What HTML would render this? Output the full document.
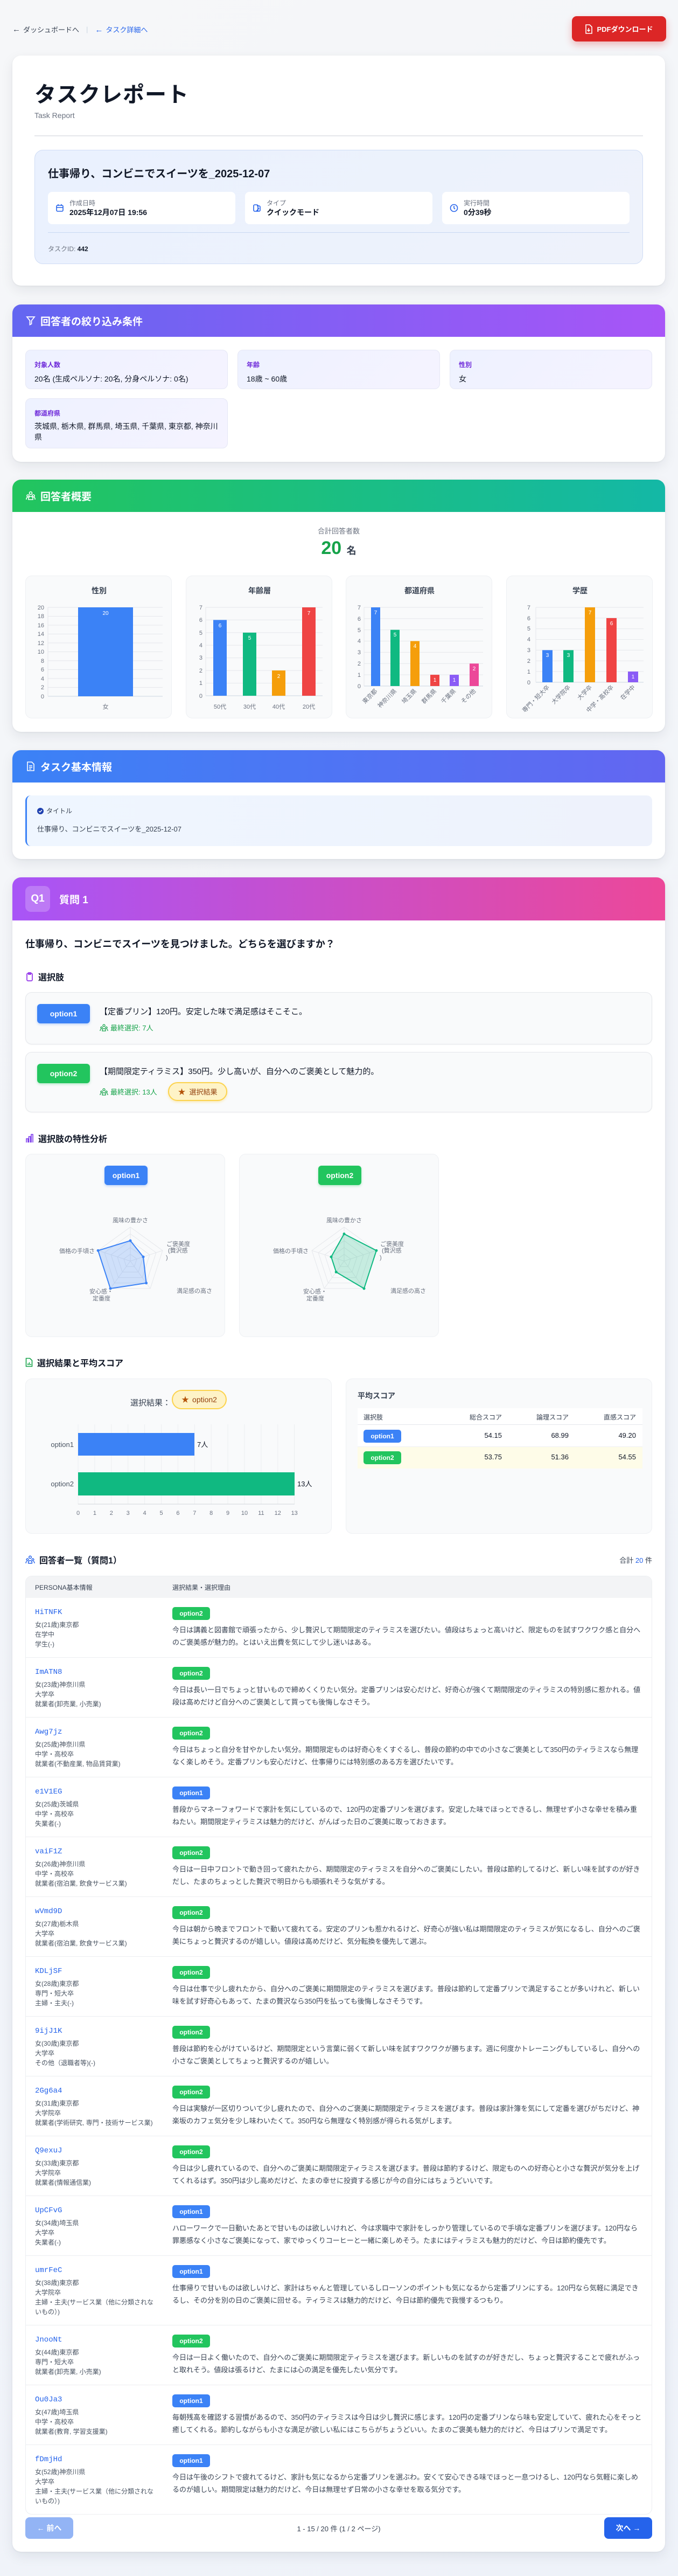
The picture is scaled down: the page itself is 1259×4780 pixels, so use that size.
<!DOCTYPE html>
<html lang="ja"><head><meta charset="utf-8"><title>タスクレポート</title>
<style>
*{box-sizing:border-box;margin:0;padding:0}
body{width:1259px;height:4780px;position:relative;background:linear-gradient(135deg,#f6f7f9,#eef2f9);font-family:"Liberation Sans","Noto Sans CJK JP",sans-serif;color:#111827;overflow:hidden}
.abs{position:absolute}
.card{position:absolute;left:23px;width:1212px;background:#fff;border-radius:16px;box-shadow:0 8px 24px rgba(15,23,42,.08),0 1px 3px rgba(15,23,42,.06);overflow:hidden}
.sh{height:60px;display:flex;align-items:center;padding-left:24px;color:#fff;font-size:19px;font-weight:700;gap:8px}
.sh svg{width:20px;height:20px}
.fbox{position:absolute;width:376px;background:linear-gradient(135deg,#eef2ff,#f5f3ff);border:1px solid #e5e7f5;border-radius:10px;padding:18px 16px}
.fbox .l{font-size:12px;color:#6d28d9;font-weight:700;margin-bottom:6px}
.fbox .v{font-size:14px;color:#111827;line-height:24px}
.cc{position:absolute;top:1068px;width:272px;height:265px;background:#f9fafb;border:1px solid #eef0f3;border-radius:12px}
.cc svg{position:absolute;left:0;top:0}
.ct{font-size:11px;fill:#6b7280;font-family:"Liberation Sans","Noto Sans CJK JP",sans-serif}
.h3{position:absolute;left:24px;font-size:16px;font-weight:700;display:flex;align-items:center;gap:8px;color:#111827}
.badge{display:inline-block;color:#fff;border-radius:6px;font-weight:700;text-align:center}
.b1{background:#3b82f6}.b2{background:#22c55e}
.opt{position:absolute;left:24px;width:1164px;background:#f9fafb;border:1px solid #e5e7eb;border-radius:12px;box-shadow:0 1px 2px rgba(0,0,0,.04)}
.row{display:flex;border-top:1px solid #eceef1;padding:16px 0 15px}
.lc{width:255px;padding-left:17px;padding-right:14px;flex:none}
.id{font-family:"Liberation Mono","Noto Sans CJK JP",monospace;font-size:14px;color:#2563eb;line-height:22px;margin-bottom:3px}
.inf{font-size:12px;color:#4b5563;line-height:18px}
.rc{flex:1;padding-right:16px;padding-left:17px}
.rb{display:inline-block;width:70px;height:24px;line-height:24px;font-size:12px;color:#fff;text-align:center;border-radius:5px;font-weight:700;margin-top:1px}
.rt{font-size:13px;color:#374151;line-height:23px;margin-top:7px}
</style></head><body>

<div class="abs" style="left:23px;top:44px;font-size:13px;color:#374151;display:flex;align-items:center;height:20px">
<span style="font-size:15px;margin-right:5px">←</span>ダッシュボードへ<span style="color:#cbd5e1;margin:0 13px">|</span><span style="color:#2563eb"><span style="font-size:15px;margin-right:5px">←</span>タスク詳細へ</span></div>
<div class="abs" style="left:1062px;top:30px;width:175px;height:47px;background:#dc2626;border-radius:9px;box-shadow:0 6px 14px rgba(220,38,38,.3);color:#fff;font-size:13px;font-weight:700;display:flex;align-items:center;justify-content:center;gap:8px">
<svg width="14" height="18" viewBox="0 0 14 18" fill="none" stroke="#fff" stroke-width="1.6"><path d="M2 1h7l4 4v12H2z"/><path d="M7 7v6M4.5 10.5 7 13l2.5-2.5"/></svg>PDFダウンロード</div>

<div class="card" style="top:103px;height:427px">
 <div class="abs" style="left:41px;top:40px;font-size:40px;font-weight:700;color:#111827;letter-spacing:1px">タスクレポート</div>
 <div class="abs" style="left:41px;top:103px;font-size:14px;color:#6b7280">Task Report</div>
 <div class="abs" style="left:41px;top:148px;width:1130px;height:2px;background:#e5e7eb"></div>
 <div class="abs" style="left:41px;top:175px;width:1130px;height:212px;background:linear-gradient(135deg,#eaf1fe,#eef2fb);border:1px solid #cfdcf5;border-radius:16px">
  <div class="abs" style="left:24px;top:27px;font-size:20px;font-weight:700">仕事帰り、コンビニでスイーツを_2025-12-07</div>
  <div class="abs" style="left:24px;top:77px;width:348px;height:60px;background:#fff;border-radius:8px"><svg class="abs" style="left:14px;top:22px" width="16" height="16" viewBox="0 0 16 16" fill="none" stroke="#2563eb" stroke-width="1.6"><rect x="2" y="3" width="12" height="11" rx="2"/><path d="M2 7h12M5 1v3M11 1v3"/></svg><div class="abs" style="left:40px;top:12px;font-size:12px;color:#6b7280">作成日時</div><div class="abs" style="left:40px;top:28px;font-size:14px;font-weight:700">2025年12月07日 19:56</div></div>
  <div class="abs" style="left:390px;top:77px;width:348px;height:60px;background:#fff;border-radius:8px"><svg class="abs" style="left:14px;top:22px" width="16" height="16" viewBox="0 0 16 16" fill="none" stroke="#2563eb" stroke-width="1.6"><rect x="2" y="2" width="8" height="12" rx="2"/><path d="M8 4h4a2 2 0 0 1 2 2v6a2 2 0 0 1-2 2H8M7 14l5-6"/></svg><div class="abs" style="left:40px;top:12px;font-size:12px;color:#6b7280">タイプ</div><div class="abs" style="left:40px;top:28px;font-size:14px;font-weight:700">クイックモード</div></div>
  <div class="abs" style="left:756px;top:77px;width:348px;height:60px;background:#fff;border-radius:8px"><svg class="abs" style="left:14px;top:22px" width="16" height="16" viewBox="0 0 16 16" fill="none" stroke="#2563eb" stroke-width="1.6"><circle cx="8" cy="8" r="6.5"/><path d="M8 4v4l2 2"/></svg><div class="abs" style="left:40px;top:12px;font-size:12px;color:#6b7280">実行時間</div><div class="abs" style="left:40px;top:28px;font-size:14px;font-weight:700">0分39秒</div></div>
  <div class="abs" style="left:24px;top:152px;width:1080px;height:1px;background:#c8d8f2"></div>
  <div class="abs" style="left:24px;top:174px;font-size:12px;color:#6b7280">タスクID: <b style="color:#111827">442</b></div>
 </div>
</div>

<div class="card" style="top:565px;height:292px">
 <div class="sh" style="background:linear-gradient(90deg,#6366f1,#a855f7)"><svg viewBox="0 0 20 20" fill="none" stroke="#fff" stroke-width="1.8"><path d="M3 3h14l-5.5 7v6l-3 1.5V10z"/></svg>回答者の絞り込み条件</div>
 <div class="fbox" style="left:24px;top:84px;height:73px"><div class="l">対象人数</div><div class="v">20名 (生成ペルソナ: 20名, 分身ペルソナ: 0名)</div></div>
 <div class="fbox" style="left:418px;top:84px;height:73px"><div class="l">年齢</div><div class="v">18歳 ~ 60歳</div></div>
 <div class="fbox" style="left:812px;top:84px;height:73px"><div class="l">性別</div><div class="v">女</div></div>
 <div class="fbox" style="left:24px;top:174px;height:93px"><div class="l">都道府県</div><div class="v" style="line-height:20px">茨城県, 栃木県, 群馬県, 埼玉県, 千葉県, 東京都, 神奈川県</div></div>
</div>

<div class="card" style="top:890px;height:468px">
 <div class="sh" style="background:linear-gradient(90deg,#22c55e,#14b8a6)"><svg viewBox="0 0 20 20" fill="none" stroke="#fff" stroke-width="1.6"><circle cx="10" cy="5" r="2.5"/><circle cx="5" cy="10" r="2"/><circle cx="15" cy="10" r="2"/><path d="M6 17v-2a4 4 0 0 1 8 0v2zM2 17v-1.5a3 3 0 0 1 3-3M18 17v-1.5a3 3 0 0 0-3-3"/></svg>回答者概要</div>
 <div class="abs" style="left:0;width:1212px;top:85px;text-align:center;font-size:13px;color:#6b7280">合計回答者数</div>
 <div class="abs" style="left:0;width:1212px;top:108px;text-align:center;color:#16a34a;font-size:34px;font-weight:700">20 <span style="font-size:18px;color:#374151">名</span></div>
</div>
<div class="cc" style="left:47px"><svg width="272" height="265">
<text x="136" y="32" text-anchor="middle" font-size="14" font-weight="700" fill="#374151">性別</text>
<g stroke="#e5e7eb"><line x1="41" x2="254" y1="58" y2="58"/><line x1="41" x2="254" y1="74.5" y2="74.5"/><line x1="41" x2="254" y1="91" y2="91"/><line x1="41" x2="254" y1="107.5" y2="107.5"/><line x1="41" x2="254" y1="124" y2="124"/><line x1="41" x2="254" y1="140.5" y2="140.5"/><line x1="41" x2="254" y1="157" y2="157"/><line x1="41" x2="254" y1="173.5" y2="173.5"/><line x1="41" x2="254" y1="190" y2="190"/><line x1="41" x2="254" y1="206.5" y2="206.5"/><line x1="41" x2="254" y1="223" y2="223" stroke="#cbd5e1"/><line x1="41" x2="41" y1="58" y2="223"/></g>
<g class="ct" text-anchor="end" font-size="10"><text x="34" y="62">20</text><text x="34" y="78">18</text><text x="34" y="95">16</text><text x="34" y="111">14</text><text x="34" y="128">12</text><text x="34" y="144">10</text><text x="34" y="161">8</text><text x="34" y="177">6</text><text x="34" y="194">4</text><text x="34" y="210">2</text><text x="34" y="227">0</text></g>
<rect x="97" y="58" width="102" height="165" fill="#3b82f6"/><text x="148" y="72" text-anchor="middle" font-size="10" fill="#fff">20</text>
<text x="148" y="246" text-anchor="middle" class="ct">女</text></svg></div>

<div class="cc" style="left:345px"><svg width="272" height="265">
<text x="136" y="32" text-anchor="middle" font-size="14" font-weight="700" fill="#374151">年齢層</text>
<g stroke="#e5e7eb"><line x1="36" x2="253" y1="58" y2="58"/><line x1="36" x2="253" y1="81.4" y2="81.4"/><line x1="36" x2="253" y1="104.9" y2="104.9"/><line x1="36" x2="253" y1="128.3" y2="128.3"/><line x1="36" x2="253" y1="151.7" y2="151.7"/><line x1="36" x2="253" y1="175.1" y2="175.1"/><line x1="36" x2="253" y1="198.6" y2="198.6"/><line x1="36" x2="253" y1="222" y2="222" stroke="#cbd5e1"/><line x1="36" x2="36" y1="58" y2="222"/></g>
<g class="ct" text-anchor="end" font-size="10"><text x="30" y="62">7</text><text x="30" y="85">6</text><text x="30" y="109">5</text><text x="30" y="132">4</text><text x="30" y="155">3</text><text x="30" y="179">2</text><text x="30" y="202">1</text><text x="30" y="226">0</text></g>
<rect x="50" y="81.4" width="25" height="140.6" fill="#3b82f6"/><rect x="105" y="104.9" width="25" height="117.1" fill="#10b981"/><rect x="159" y="175.1" width="25" height="46.9" fill="#f59e0b"/><rect x="215" y="58" width="25" height="164" fill="#ef4444"/>
<g font-size="10" fill="#fff" text-anchor="middle"><text x="62.5" y="95">6</text><text x="117.5" y="118">5</text><text x="171.5" y="189">2</text><text x="227.5" y="72">7</text></g>
<g class="ct" text-anchor="middle" font-size="10"><text x="62.5" y="246">50代</text><text x="117.5" y="246">30代</text><text x="171.5" y="246">40代</text><text x="227.5" y="246">20代</text></g></svg></div>

<div class="cc" style="left:642px"><svg width="272" height="265">
<text x="136" y="32" text-anchor="middle" font-size="14" font-weight="700" fill="#374151">都道府県</text>
<g stroke="#e5e7eb"><line x1="33" x2="254" y1="58" y2="58"/><line x1="33" x2="254" y1="78.9" y2="78.9"/><line x1="33" x2="254" y1="99.7" y2="99.7"/><line x1="33" x2="254" y1="120.6" y2="120.6"/><line x1="33" x2="254" y1="141.4" y2="141.4"/><line x1="33" x2="254" y1="162.3" y2="162.3"/><line x1="33" x2="254" y1="183.1" y2="183.1"/><line x1="33" x2="254" y1="204" y2="204" stroke="#cbd5e1"/><line x1="33" x2="33" y1="58" y2="204"/></g>
<g class="ct" text-anchor="end" font-size="10"><text x="27" y="62">7</text><text x="27" y="83">6</text><text x="27" y="104">5</text><text x="27" y="124">4</text><text x="27" y="145">3</text><text x="27" y="166">2</text><text x="27" y="187">1</text><text x="27" y="208">0</text></g>
<rect x="46" y="58" width="17" height="146" fill="#3b82f6"/><rect x="82" y="99.7" width="17" height="104.3" fill="#10b981"/><rect x="119" y="120.6" width="17" height="83.4" fill="#f59e0b"/><rect x="156" y="183.1" width="17" height="20.9" fill="#ef4444"/><rect x="192" y="183.1" width="17" height="20.9" fill="#8b5cf6"/><rect x="229" y="162.3" width="17" height="41.7" fill="#ec4899"/>
<g font-size="10" fill="#fff" text-anchor="middle"><text x="54.5" y="71">7</text><text x="90.5" y="112">5</text><text x="127.5" y="133">4</text><text x="164.5" y="196">1</text><text x="200.5" y="196">1</text><text x="237.5" y="175">2</text></g>
<g class="ct" text-anchor="end" font-size="10"><text transform="translate(58 214) rotate(-45)">東京都</text><text transform="translate(94 214) rotate(-45)">神奈川県</text><text transform="translate(131 214) rotate(-45)">埼玉県</text><text transform="translate(168 214) rotate(-45)">群馬県</text><text transform="translate(204 214) rotate(-45)">千葉県</text><text transform="translate(241 214) rotate(-45)">その他</text></g></svg></div>

<div class="cc" style="left:940px"><svg width="272" height="265">
<text x="136" y="32" text-anchor="middle" font-size="14" font-weight="700" fill="#374151">学歴</text>
<g stroke="#e5e7eb"><line x1="54" x2="254" y1="58" y2="58"/><line x1="54" x2="254" y1="77.9" y2="77.9"/><line x1="54" x2="254" y1="97.7" y2="97.7"/><line x1="54" x2="254" y1="117.6" y2="117.6"/><line x1="54" x2="254" y1="137.4" y2="137.4"/><line x1="54" x2="254" y1="157.3" y2="157.3"/><line x1="54" x2="254" y1="177.1" y2="177.1"/><line x1="54" x2="254" y1="197" y2="197" stroke="#cbd5e1"/><line x1="54" x2="54" y1="58" y2="197"/></g>
<g class="ct" text-anchor="end" font-size="10"><text x="44" y="62">7</text><text x="44" y="82">6</text><text x="44" y="101">5</text><text x="44" y="121">4</text><text x="44" y="141">3</text><text x="44" y="161">2</text><text x="44" y="181">1</text><text x="44" y="201">0</text></g>
<rect x="66" y="137.4" width="19" height="59.6" fill="#3b82f6"/><rect x="105" y="137.4" width="19" height="59.6" fill="#10b981"/><rect x="145" y="58" width="19" height="139" fill="#f59e0b"/><rect x="185" y="77.9" width="19" height="119.1" fill="#ef4444"/><rect x="225" y="177.1" width="19" height="19.9" fill="#8b5cf6"/>
<g font-size="10" fill="#fff" text-anchor="middle"><text x="75.5" y="150">3</text><text x="114.5" y="150">3</text><text x="154.5" y="71">7</text><text x="194.5" y="91">6</text><text x="234.5" y="190">1</text></g>
<g class="ct" text-anchor="end" font-size="10"><text transform="translate(80 207) rotate(-45)">専門・短大卒</text><text transform="translate(119 207) rotate(-45)">大学院卒</text><text transform="translate(159 207) rotate(-45)">大学卒</text><text transform="translate(199 207) rotate(-45)">中学・高校卒</text><text transform="translate(239 207) rotate(-45)">在学中</text></g></svg></div>

<div class="card" style="top:1392px;height:202px">
 <div class="sh" style="background:linear-gradient(90deg,#3b82f6,#6366f1)"><svg viewBox="0 0 20 20" fill="none" stroke="#fff" stroke-width="1.6"><path d="M4 2h8l4 4v12H4z"/><path d="M7 9h6M7 12h6M7 15h4"/></svg>タスク基本情報</div>
 <div class="abs" style="left:24px;top:84px;width:1164px;height:94px;background:linear-gradient(90deg,#eff6ff,#eef2fc);border-left:3px solid #3b82f6;border-radius:10px">
  <div class="abs" style="left:19px;top:20px;font-size:12px;color:#374151;display:flex;align-items:center;gap:5px"><svg width="12" height="12" viewBox="0 0 12 12"><circle cx="6" cy="6" r="6" fill="#1e40af"/><path d="M3.3 6.2 5.2 8 8.8 4.2" stroke="#fff" stroke-width="1.5" fill="none"/></svg>タイトル</div>
  <div class="abs" style="left:19px;top:52px;font-size:13px;color:#374151">仕事帰り、コンビニでスイーツを_2025-12-07</div>
 </div>
</div>

<div class="card" style="top:1628px;height:3107px">
 <div style="height:80px;background:linear-gradient(90deg,#a855f7,#ec4899);display:flex;align-items:center;padding-left:24px;gap:17px;color:#fff">
  <div style="width:46px;height:48px;border-radius:10px;background:rgba(255,255,255,.22);display:flex;align-items:center;justify-content:center;font-size:19px;font-weight:700">Q1</div>
  <div style="font-size:19px;font-weight:700">質問 1</div></div>
 <div class="abs" style="left:24px;top:110px;font-size:18px;font-weight:700">仕事帰り、コンビニでスイーツを見つけました。どちらを選びますか？</div>
 <div class="h3" style="top:172px"><svg width="16" height="18" viewBox="0 0 16 18" fill="none" stroke="#9333ea" stroke-width="1.7"><rect x="3" y="3" width="10" height="14" rx="2"/><path d="M6 2h4v3H6z"/></svg>選択肢</div>
 <div class="opt" style="top:213px;height:97px">
  <div class="badge b1 abs" style="left:21px;top:21px;width:98px;height:36px;line-height:36px;font-size:14px;box-shadow:0 2px 5px rgba(59,130,246,.3)">option1</div>
  <div class="abs" style="left:137px;top:24px;font-size:15px;color:#111827">【定番プリン】120円。安定した味で満足感はそこそこ。</div>
  <div class="abs" style="left:137px;top:55px;font-size:13px;color:#16a34a;display:flex;align-items:center;gap:4px"><svg width="16" height="14" viewBox="0 0 16 14" fill="none" stroke="#16a34a" stroke-width="1.3"><circle cx="8" cy="3" r="2"/><circle cx="3.5" cy="7" r="1.6"/><circle cx="12.5" cy="7" r="1.6"/><path d="M5 13v-1.5a3 3 0 0 1 6 0V13zM1 13v-1a2 2 0 0 1 2-2M15 13v-1a2 2 0 0 0-2-2"/></svg>最終選択: 7人</div>
 </div>
 <div class="opt" style="top:324px;height:112px">
  <div class="badge b2 abs" style="left:21px;top:21px;width:98px;height:36px;line-height:36px;font-size:14px;box-shadow:0 2px 5px rgba(34,197,94,.3)">option2</div>
  <div class="abs" style="left:137px;top:24px;font-size:15px;color:#111827">【期間限定ティラミス】350円。少し高いが、自分へのご褒美として魅力的。</div>
  <div class="abs" style="left:137px;top:63px;font-size:13px;color:#16a34a;display:flex;align-items:center;gap:4px"><svg width="16" height="14" viewBox="0 0 16 14" fill="none" stroke="#16a34a" stroke-width="1.3"><circle cx="8" cy="3" r="2"/><circle cx="3.5" cy="7" r="1.6"/><circle cx="12.5" cy="7" r="1.6"/><path d="M5 13v-1.5a3 3 0 0 1 6 0V13zM1 13v-1a2 2 0 0 1 2-2M15 13v-1a2 2 0 0 0-2-2"/></svg>最終選択: 13人</div>
  <div class="abs" style="left:264px;top:55px;width:110px;height:35px;border:2px solid #fcd34d;background:#fef3c7;border-radius:18px;font-size:13px;color:#92400e;display:flex;align-items:center;justify-content:center;gap:7px;box-shadow:0 2px 5px rgba(252,211,77,.4)"><span style="color:#b45309;font-size:14px">★</span>選択結果</div>
 </div>

 <div class="h3" style="top:472px"><svg width="16" height="18" viewBox="0 0 16 18" fill="none" stroke="#7c3aed" stroke-width="1.6"><path d="M2 17V10h3v7M6.5 17V6h3v11M11 17V2h3v15"/></svg>選択肢の特性分析</div>
 <div class="abs" style="left:24px;top:513px;width:371px;height:340px;background:#f9fafb;border:1px solid #eef0f3;border-radius:12px">
  <div class="badge b1 abs" style="left:146px;top:21px;width:80px;height:36px;line-height:36px;font-size:14px;box-shadow:0 2px 5px rgba(59,130,246,.3)">option1</div>
  <svg class="abs" style="left:0;top:0" width="371" height="340">
   <g fill="none" stroke="#e5e7eb"><polygon points="194,135 253.9,178.5 231,249 157,249 134.1,178.5"/><polygon points="194,147.6 241.9,182.4 223.6,238.8 164.4,238.8 146.1,182.4"/><polygon points="194,160.2 229.9,186.3 216.2,228.6 171.8,228.6 158.1,186.3"/><polygon points="194,172.8 218,190.2 208.8,218.4 179.2,218.4 170,190.2"/><polygon points="194,185.4 206,194.1 201.4,208.2 186.6,208.2 182,194.1"/><path d="M194 198V135M194 198l59.9-19.5M194 198l37 51M194 198l-37 51M194 198l-59.9-19.5"/></g>
   <polygon points="194,160.2 218,190.2 223.6,238.8 157,249 134.1,178.5" fill="rgba(59,130,246,.22)" stroke="#3b82f6" stroke-width="2"/>
   <g fill="#3b82f6"><circle cx="194" cy="160.2" r="2.5"/><circle cx="218" cy="190.2" r="2.5"/><circle cx="223.6" cy="238.8" r="2.5"/><circle cx="157" cy="249" r="2.5"/><circle cx="134.1" cy="178.5" r="2.5"/></g>
   <g class="ct" font-size="10"><text x="194" y="126" text-anchor="middle">風味の豊かさ</text><text x="261" y="170">ご褒美度</text><text x="264" y="182">(贅沢感</text><text x="260" y="195">)</text><text x="280" y="257">満足感の高さ</text><text x="118" y="258">安心感・</text><text x="124" y="271">定番度</text><text x="128" y="183" text-anchor="end">価格の手頃さ</text></g>
  </svg>
 </div>
 <div class="abs" style="left:421px;top:513px;width:371px;height:340px;background:#f9fafb;border:1px solid #eef0f3;border-radius:12px">
  <div class="badge b2 abs" style="left:146px;top:21px;width:80px;height:36px;line-height:36px;font-size:14px;box-shadow:0 2px 5px rgba(34,197,94,.3)">option2</div>
  <svg class="abs" style="left:0;top:0" width="371" height="340">
   <g fill="none" stroke="#e5e7eb"><polygon points="194,135 253.9,178.5 231,249 157,249 134.1,178.5"/><polygon points="194,147.6 241.9,182.4 223.6,238.8 164.4,238.8 146.1,182.4"/><polygon points="194,160.2 229.9,186.3 216.2,228.6 171.8,228.6 158.1,186.3"/><polygon points="194,172.8 218,190.2 208.8,218.4 179.2,218.4 170,190.2"/><polygon points="194,185.4 206,194.1 201.4,208.2 186.6,208.2 182,194.1"/><path d="M194 198V135M194 198l59.9-19.5M194 198l37 51M194 198l-37 51M194 198l-59.9-19.5"/></g>
   <polygon points="194,147.6 253.9,178.5 231,249 179.2,218.4 170,190.2" fill="rgba(16,185,129,.22)" stroke="#10b981" stroke-width="2"/>
   <g fill="#10b981"><circle cx="194" cy="147.6" r="2.5"/><circle cx="253.9" cy="178.5" r="2.5"/><circle cx="231" cy="249" r="2.5"/><circle cx="179.2" cy="218.4" r="2.5"/><circle cx="170" cy="190.2" r="2.5"/></g>
   <g class="ct" font-size="10"><text x="194" y="126" text-anchor="middle">風味の豊かさ</text><text x="261" y="170">ご褒美度</text><text x="264" y="182">(贅沢感</text><text x="260" y="195">)</text><text x="280" y="257">満足感の高さ</text><text x="118" y="258">安心感・</text><text x="124" y="271">定番度</text><text x="128" y="183" text-anchor="end">価格の手頃さ</text></g>
  </svg>
 </div>

 <div class="h3" style="top:888px"><svg width="14" height="18" viewBox="0 0 14 18" fill="none" stroke="#16a34a" stroke-width="1.6"><path d="M1.5 1.5h7l4 4v11h-11z"/><path d="M5 14v-3M7.5 14V9M10 14v-2"/></svg>選択結果と平均スコア</div>
 <div class="abs" style="left:24px;top:930px;width:569px;height:288px;background:#f9fafb;border:1px solid #eef0f3;border-radius:12px">
  <div class="abs" style="left:194px;top:33px;font-size:15px;color:#374151">選択結果：</div>
  <div class="abs" style="left:271px;top:20px;width:102px;height:36px;border:2px solid #fcd34d;background:#fef3c7;border-radius:18px;font-size:14px;color:#92400e;display:flex;align-items:center;justify-content:center;gap:6px"><span style="color:#b45309">★</span>option2</div>
  <svg class="abs" style="left:0;top:0" width="569" height="288">
   <g stroke="#eceef1"><line x1="97" x2="97" y1="84" y2="232"/><line x1="127.9" x2="127.9" y1="84" y2="232"/><line x1="158.8" x2="158.8" y1="84" y2="232"/><line x1="189.7" x2="189.7" y1="84" y2="232"/><line x1="220.6" x2="220.6" y1="84" y2="232"/><line x1="251.5" x2="251.5" y1="84" y2="232"/><line x1="282.4" x2="282.4" y1="84" y2="232"/><line x1="313.3" x2="313.3" y1="84" y2="232"/><line x1="344.2" x2="344.2" y1="84" y2="232"/><line x1="375.1" x2="375.1" y1="84" y2="232"/><line x1="406" x2="406" y1="84" y2="232"/><line x1="436.9" x2="436.9" y1="84" y2="232"/><line x1="467.8" x2="467.8" y1="84" y2="232"/><line x1="498.7" x2="498.7" y1="84" y2="232"/><line x1="97" x2="499" y1="232" y2="232" stroke="#d1d5db"/></g>
   <rect x="97" y="100" width="216" height="42" fill="#3b82f6"/><rect x="97" y="173" width="402" height="43" fill="#10b981"/>
   <g font-size="13" fill="#4b5563" font-family="Liberation Sans,sans-serif"><text x="89" y="126" text-anchor="end">option1</text><text x="89" y="199" text-anchor="end">option2</text><text x="318" y="126" fill="#111827">7人</text><text x="504" y="199" fill="#111827">13人</text></g>
   <g class="ct" font-size="10" text-anchor="middle"><text x="97" y="252">0</text><text x="127.9" y="252">1</text><text x="158.8" y="252">2</text><text x="189.7" y="252">3</text><text x="220.6" y="252">4</text><text x="251.5" y="252">5</text><text x="282.4" y="252">6</text><text x="313.3" y="252">7</text><text x="344.2" y="252">8</text><text x="375.1" y="252">9</text><text x="406" y="252">10</text><text x="436.9" y="252">11</text><text x="467.8" y="252">12</text><text x="498.7" y="252">13</text></g>
  </svg>
 </div>
 <div class="abs" style="left:619px;top:930px;width:569px;height:288px;background:#f9fafb;border:1px solid #eef0f3;border-radius:12px">
  <div class="abs" style="left:21px;top:21px;font-size:14px;font-weight:700;color:#374151">平均スコア</div>
  <div class="abs" style="left:21px;top:54px;width:529px;height:31px;background:#fff;border-bottom:1px solid #e5e7eb;font-size:12px;color:#374151">
   <span class="abs" style="left:11px;top:8px">選択肢</span><span class="abs" style="right:261px;top:8px">総合スコア</span><span class="abs" style="right:137px;top:8px">論理スコア</span><span class="abs" style="right:12px;top:8px">直感スコア</span></div>
  <div class="abs" style="left:21px;top:85px;width:529px;height:41px;background:#fff;border-bottom:1px solid #eef0f3;font-size:13px;color:#111827">
   <span class="badge b1 abs" style="left:11px;top:9px;width:70px;height:24px;line-height:24px;font-size:12px;border-radius:5px">option1</span><span class="abs" style="right:261px;top:12px">54.15</span><span class="abs" style="right:137px;top:12px">68.99</span><span class="abs" style="right:12px;top:12px">49.20</span></div>
  <div class="abs" style="left:21px;top:126px;width:529px;height:40px;background:#fefce8;font-size:13px;color:#111827">
   <span class="badge b2 abs" style="left:11px;top:8px;width:70px;height:24px;line-height:24px;font-size:12px;border-radius:5px">option2</span><span class="abs" style="right:261px;top:11px">53.75</span><span class="abs" style="right:137px;top:11px">51.36</span><span class="abs" style="right:12px;top:11px">54.55</span></div>
 </div>

 <div class="h3" style="top:1254px"><svg width="18" height="18" viewBox="0 0 16 14" fill="none" stroke="#2563eb" stroke-width="1.3"><circle cx="8" cy="3" r="2"/><circle cx="3.5" cy="7" r="1.6"/><circle cx="12.5" cy="7" r="1.6"/><path d="M5 13v-1.5a3 3 0 0 1 6 0V13zM1 13v-1a2 2 0 0 1 2-2M15 13v-1a2 2 0 0 0-2-2"/></svg>回答者一覧（質問1）</div>
 <div class="abs" style="right:24px;top:1257px;font-size:13px;color:#374151">合計 <b style="color:#2563eb;font-weight:400">20</b> 件</div>

 <div class="abs" style="left:24px;top:1296px;width:1164px;border:1px solid #eceef1;border-radius:12px;overflow:hidden;background:#fff">
  <div style="height:40px;background:#f3f4f6;display:flex;align-items:center;font-size:12px;color:#374151"><div style="width:255px;padding-left:17px">PERSONA基本情報</div><div style="padding-left:17px">選択結果・選択理由</div></div>

  <div class="row" style="border-top:none"><div class="lc"><div class="id">HiTNFK</div><div class="inf">女(21歳)東京都<br>在学中<br>学生(-)</div></div><div class="rc"><span class="rb b2">option2</span><div class="rt">今日は講義と図書館で頑張ったから、少し贅沢して期間限定のティラミスを選びたい。値段はちょっと高いけど、限定ものを試すワクワク感と自分へのご褒美感が魅力的。とはいえ出費を気にして少し迷いはある。</div></div></div>
  <div class="row"><div class="lc"><div class="id">ImATN8</div><div class="inf">女(23歳)神奈川県<br>大学卒<br>就業者(卸売業, 小売業)</div></div><div class="rc"><span class="rb b2">option2</span><div class="rt">今日は長い一日でちょっと甘いもので締めくくりたい気分。定番プリンは安心だけど、好奇心が強くて期間限定のティラミスの特別感に惹かれる。値段は高めだけど自分へのご褒美として買っても後悔しなさそう。</div></div></div>
  <div class="row"><div class="lc"><div class="id">Awg7jz</div><div class="inf">女(25歳)神奈川県<br>中学・高校卒<br>就業者(不動産業, 物品賃貸業)</div></div><div class="rc"><span class="rb b2">option2</span><div class="rt">今日はちょっと自分を甘やかしたい気分。期間限定ものは好奇心をくすぐるし、普段の節約の中での小さなご褒美として350円のティラミスなら無理なく楽しめそう。定番プリンも安心だけど、仕事帰りには特別感のある方を選びたいです。</div></div></div>
  <div class="row"><div class="lc"><div class="id">e1V1EG</div><div class="inf">女(25歳)茨城県<br>中学・高校卒<br>失業者(-)</div></div><div class="rc"><span class="rb b1">option1</span><div class="rt">普段からマネーフォワードで家計を気にしているので、120円の定番プリンを選びます。安定した味でほっとできるし、無理せず小さな幸せを積み重ねたい。期間限定ティラミスは魅力的だけど、がんばった日のご褒美に取っておきます。</div></div></div>
  <div class="row"><div class="lc"><div class="id">vaiF1Z</div><div class="inf">女(26歳)神奈川県<br>中学・高校卒<br>就業者(宿泊業, 飲食サービス業)</div></div><div class="rc"><span class="rb b2">option2</span><div class="rt">今日は一日中フロントで動き回って疲れたから、期間限定のティラミスを自分へのご褒美にしたい。普段は節約してるけど、新しい味を試すのが好きだし、たまのちょっとした贅沢で明日からも頑張れそうな気がする。</div></div></div>
  <div class="row"><div class="lc"><div class="id">wVmd9D</div><div class="inf">女(27歳)栃木県<br>大学卒<br>就業者(宿泊業, 飲食サービス業)</div></div><div class="rc"><span class="rb b2">option2</span><div class="rt">今日は朝から晩までフロントで動いて疲れてる。安定のプリンも惹かれるけど、好奇心が強い私は期間限定のティラミスが気になるし、自分へのご褒美にちょっと贅沢するのが嬉しい。値段は高めだけど、気分転換を優先して選ぶ。</div></div></div>
  <div class="row"><div class="lc"><div class="id">KDLjSF</div><div class="inf">女(28歳)東京都<br>専門・短大卒<br>主婦・主夫(-)</div></div><div class="rc"><span class="rb b2">option2</span><div class="rt">今日は仕事で少し疲れたから、自分へのご褒美に期間限定のティラミスを選びます。普段は節約して定番プリンで満足することが多いけれど、新しい味を試す好奇心もあって、たまの贅沢なら350円を払っても後悔しなさそうです。</div></div></div>
  <div class="row"><div class="lc"><div class="id">9ijJ1K</div><div class="inf">女(30歳)東京都<br>大学卒<br>その他（退職者等)(-)</div></div><div class="rc"><span class="rb b2">option2</span><div class="rt">普段は節約を心がけているけど、期間限定という言葉に弱くて新しい味を試すワクワクが勝ちます。週に何度かトレーニングもしているし、自分への小さなご褒美としてちょっと贅沢するのが嬉しい。</div></div></div>
  <div class="row"><div class="lc"><div class="id">2Gg6a4</div><div class="inf">女(31歳)東京都<br>大学院卒<br>就業者(学術研究, 専門・技術サービス業)</div></div><div class="rc"><span class="rb b2">option2</span><div class="rt">今日は実験が一区切りついて少し疲れたので、自分へのご褒美に期間限定ティラミスを選びます。普段は家計簿を気にして定番を選びがちだけど、神楽坂のカフェ気分を少し味わいたくて。350円なら無理なく特別感が得られる気がします。</div></div></div>
  <div class="row"><div class="lc"><div class="id">Q9exuJ</div><div class="inf">女(33歳)東京都<br>大学院卒<br>就業者(情報通信業)</div></div><div class="rc"><span class="rb b2">option2</span><div class="rt">今日は少し疲れているので、自分へのご褒美に期間限定ティラミスを選びます。普段は節約するけど、限定ものへの好奇心と小さな贅沢が気分を上げてくれるはず。350円は少し高めだけど、たまの幸せに投資する感じが今の自分にはちょうどいいです。</div></div></div>
  <div class="row"><div class="lc"><div class="id">UpCFvG</div><div class="inf">女(34歳)埼玉県<br>大学卒<br>失業者(-)</div></div><div class="rc"><span class="rb b1">option1</span><div class="rt">ハローワークで一日動いたあとで甘いものは欲しいけれど、今は求職中で家計をしっかり管理しているので手頃な定番プリンを選びます。120円なら罪悪感なく小さなご褒美になって、家でゆっくりコーヒーと一緒に楽しめそう。たまにはティラミスも魅力的だけど、今日は節約優先です。</div></div></div>
  <div class="row"><div class="lc"><div class="id">umrFeC</div><div class="inf">女(38歳)東京都<br>大学院卒<br>主婦・主夫(サービス業（他に分類されないもの）)</div></div><div class="rc"><span class="rb b1">option1</span><div class="rt">仕事帰りで甘いものは欲しいけど、家計はちゃんと管理しているしローソンのポイントも気になるから定番プリンにする。120円なら気軽に満足できるし、その分を別の日のご褒美に回せる。ティラミスは魅力的だけど、今日は節約優先で我慢するつもり。</div></div></div>
  <div class="row"><div class="lc"><div class="id">JnooNt</div><div class="inf">女(44歳)東京都<br>専門・短大卒<br>就業者(卸売業, 小売業)</div></div><div class="rc"><span class="rb b2">option2</span><div class="rt">今日は一日よく働いたので、自分へのご褒美に期間限定ティラミスを選びます。新しいものを試すのが好きだし、ちょっと贅沢することで疲れがふっと取れそう。値段は張るけど、たまには心の満足を優先したい気分です。</div></div></div>
  <div class="row"><div class="lc"><div class="id">Ou0Ja3</div><div class="inf">女(47歳)埼玉県<br>中学・高校卒<br>就業者(教育, 学習支援業)</div></div><div class="rc"><span class="rb b1">option1</span><div class="rt">毎朝残高を確認する習慣があるので、350円のティラミスは今日は少し贅沢に感じます。120円の定番プリンなら味も安定していて、疲れた心をそっと癒してくれる。節約しながらも小さな満足が欲しい私にはこちらがちょうどいい。たまのご褒美も魅力的だけど、今日はプリンで満足です。</div></div></div>
  <div class="row"><div class="lc"><div class="id">fDmjHd</div><div class="inf">女(52歳)神奈川県<br>大学卒<br>主婦・主夫(サービス業（他に分類されないもの）)</div></div><div class="rc"><span class="rb b1">option1</span><div class="rt">今日は午後のシフトで疲れてるけど、家計も気になるから定番プリンを選ぶわ。安くて安心できる味でほっと一息つけるし、120円なら気軽に楽しめるのが嬉しい。期間限定は魅力的だけど、今日は無理せず日常の小さな幸せを取る気分です。</div></div></div>
 </div>

 <div class="abs" style="left:24px;top:3043px;width:89px;height:40px;background:#93b4f5;border-radius:8px;color:#fff;font-size:14px;font-weight:700;display:flex;align-items:center;justify-content:center">← 前へ</div>
 <div class="abs" style="left:0;width:1212px;top:3054px;text-align:center;font-size:13px;color:#374151">1 - 15 / 20 件 (1 / 2 ページ)</div>
 <div class="abs" style="left:1099px;top:3043px;width:89px;height:40px;background:#2563eb;border-radius:8px;color:#fff;font-size:14px;font-weight:700;display:flex;align-items:center;justify-content:center">次へ →</div>
</div>
</body></html>
